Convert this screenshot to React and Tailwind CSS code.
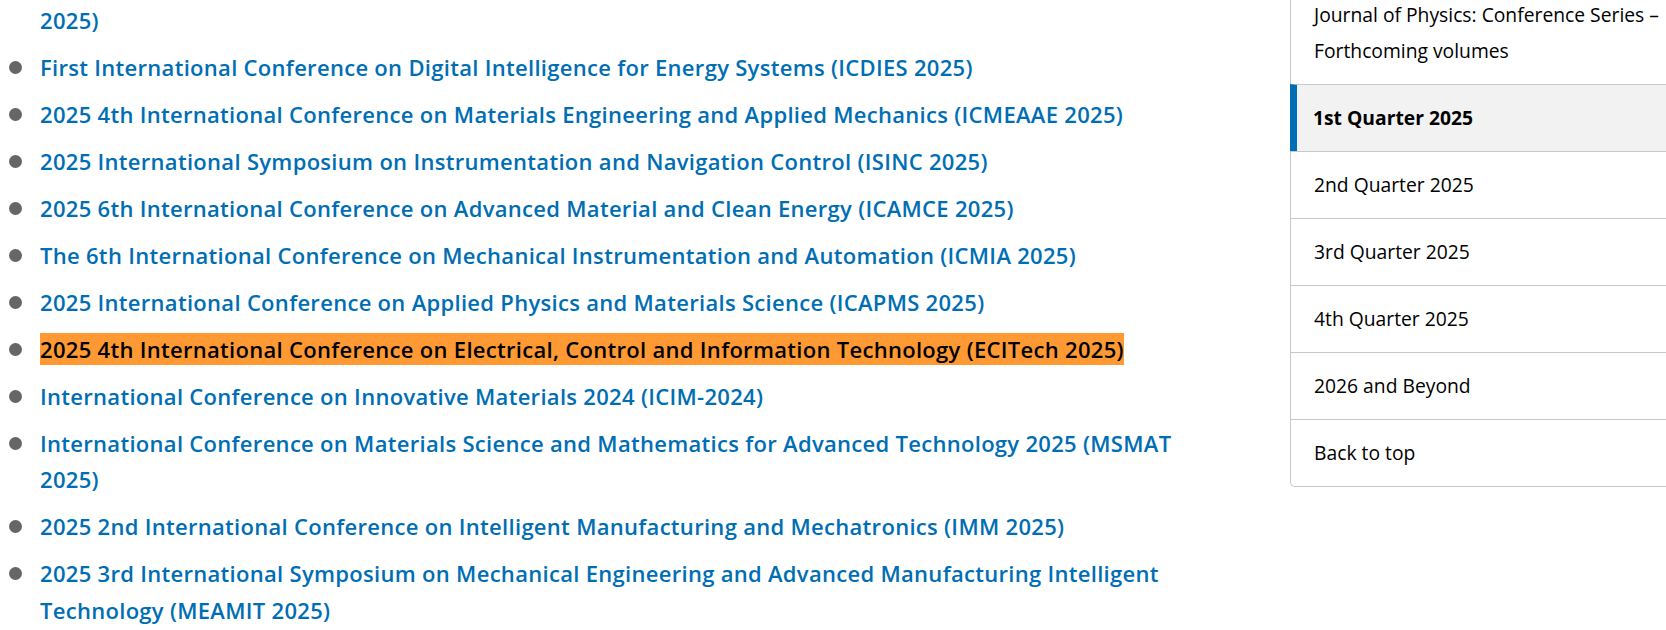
import React from 'react';

const conferences = [
  { name: 'International Conference on Mechanical, Electronic and Computer Engineering (MECE', tail: '2025)' },
  { name: 'First International Conference on Digital Intelligence for Energy Systems (ICDIES 2025)' },
  { name: '2025 4th International Conference on Materials Engineering and Applied Mechanics (ICMEAAE 2025)' },
  { name: '2025 International Symposium on Instrumentation and Navigation Control (ISINC 2025)' },
  { name: '2025 6th International Conference on Advanced Material and Clean Energy (ICAMCE 2025)' },
  { name: 'The 6th International Conference on Mechanical Instrumentation and Automation (ICMIA 2025)' },
  { name: '2025 International Conference on Applied Physics and Materials Science (ICAPMS 2025)' },
  { name: '2025 4th International Conference on Electrical, Control and Information Technology (ECITech 2025)', active: true },
  { name: 'International Conference on Innovative Materials 2024 (ICIM-2024)' },
  { name: 'International Conference on Materials Science and Mathematics for Advanced Technology 2025 (MSMAT 2025)' },
  { name: '2025 2nd International Conference on Intelligent Manufacturing and Mechatronics (IMM 2025)' },
  { name: '2025 3rd International Symposium on Mechanical Engineering and Advanced Manufacturing Intelligent Technology (MEAMIT 2025)' },
];

const sections = [
  { label: 'Journal of Physics: Conference Series – Forthcoming volumes' },
  { label: '1st Quarter 2025', active: true },
  { label: '2nd Quarter 2025' },
  { label: '3rd Quarter 2025' },
  { label: '4th Quarter 2025' },
  { label: '2026 and Beyond' },
  { label: 'Back to top' },
];

const App = () => {
  return (
    <div className="w-[1666px] h-[630px] overflow-hidden bg-white flex font-['Open_Sans','Liberation_Sans',sans-serif]">
      {/* conference list */}
      <ul className="w-[1185px] shrink-0 -mt-[35px] pl-[40px]">
        {conferences.map((c, i) => (
          <li key={i} className="relative mb-[10.2px] text-[22px] leading-[36.8px] tracking-[0.3px] font-semibold">
            <span className="absolute -left-[31px] top-[12px] w-[13px] h-[13px] rounded-full bg-[#666666]" />
            {c.active ? (
              <a href="#" className="bg-[#ff9933] text-black py-[1px]">{c.name}</a>
            ) : c.tail ? (
              <a href="#" className="text-[#006eb4]">{c.name}<br />{c.tail}</a>
            ) : (
              <a href="#" className="text-[#006eb4]">{c.name}</a>
            )}
          </li>
        ))}
      </ul>

      {/* side navigation */}
      <div className="ml-[105px] shrink-0 w-[420px] -mt-[19px] self-start border-l border-b border-[#c8c8c8] rounded-bl-[5px]">
        {sections.map((s, i) => (
          <a
            key={i}
            href="#"
            className={
              s.active
                ? 'flex border-t border-[#c8c8c8] bg-[#f2f2f2] border-l-[7px] border-l-[#006eb4] -ml-px pl-[16px] pr-[23px] py-[15px] text-[19.3px] leading-[36px] font-bold text-black'
                : 'flex border-t border-[#c8c8c8] px-[23px] py-[15px] text-[19.3px] leading-[36px] text-black'
            }
          >
            {s.label}
          </a>
        ))}
      </div>
    </div>
  );
};

export default App;
